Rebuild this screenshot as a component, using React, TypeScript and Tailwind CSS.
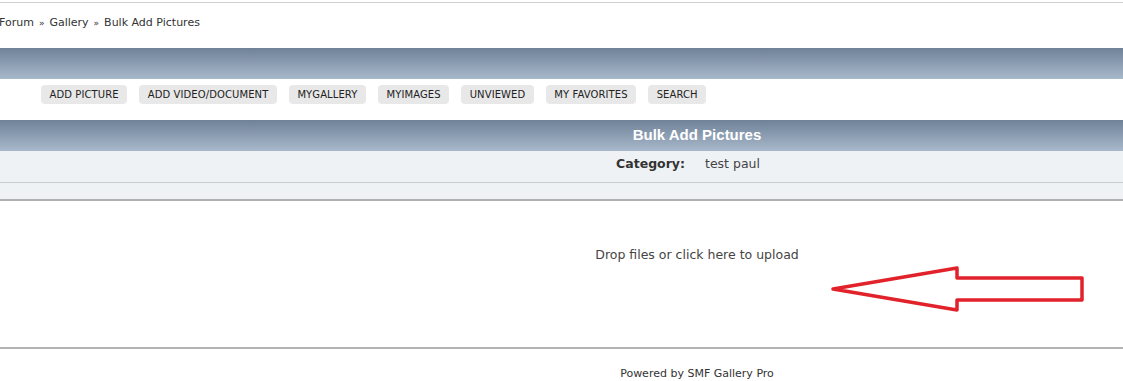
const buttons = ['ADD PICTURE', 'ADD VIDEO/DOCUMENT', 'MYGALLERY', 'MYIMAGES', 'UNVIEWED', 'MY FAVORITES', 'SEARCH'];

function Arrow() {
  return (
    <svg className="absolute left-[826px] top-[262px]" width="262" height="56" viewBox="826 262 262 56">
      <polygon
        points="833,289 957,268 957,278 1082,278 1082,300 957,300 957,310"
        fill="none"
        stroke="#e2222a"
        strokeWidth="3.5"
        strokeLinejoin="round"
      />
    </svg>
  );
}

export default function App() {
  return (
    <div className="relative w-[1123px] h-[381px] overflow-hidden bg-white text-[#333] font-['DejaVu_Sans',Verdana,sans-serif]">
      <div className="w-[1394px]">
        <div className="mt-[2px] border-t border-[#d0d0d0]" />
        <div className="h-[45px] flex items-center pb-[4px] text-[11px] text-[#333] -ml-[1px]">
          <span>Forum</span>
          <span className="mx-[5px] text-[9px]">»</span>
          <span>Gallery</span>
          <span className="mx-[5px] text-[9px]">»</span>
          <span>Bulk Add Pictures</span>
        </div>

        <div className="h-[31px] bg-gradient-to-b from-[#6f8297] to-[#a9b9cc]" />

        <div className="h-[41px] flex items-start pt-[6px] pl-[41px] gap-[12px]">
          {buttons.map((b) => (
            <span
              key={b}
              className="h-[19px] px-[8.5px] flex items-center rounded-[4px] bg-[#e8e8e8] text-[10px] text-[#222] tracking-[0.1px]"
            >
              {b}
            </span>
          ))}
        </div>

        <div className="h-[31px] bg-gradient-to-b from-[#6f8297] to-[#a9b9cc] flex items-center justify-center">
          <span className="text-white font-bold text-[15px] font-['Liberation_Sans',Arial,sans-serif]">Bulk Add Pictures</span>
        </div>

        <div className="bg-[#eff2f5]">
          <div className="h-[32px] grid grid-cols-2 items-start pt-[4px] text-[12.5px] border-b border-[#c9cdd1]">
            <div className="text-right pr-[12px] font-bold">Category:</div>
            <div className="pl-[8px] text-[#444]">test paul</div>
          </div>
          <div className="h-[16px]" />
        </div>
        <div className="border-t-2 border-[#b0b0b0]" />

        <div className="h-[146px] flex justify-center pt-[45px] text-[12.5px] text-[#444]">
          Drop files or click here to upload
        </div>

        <div className="border-t-2 border-[#b3b3b3]" />
        <div className="flex justify-center pt-[17px] text-[11px] text-[#333]">Powered by SMF Gallery Pro</div>
      </div>
      <Arrow />
    </div>
  );
}
